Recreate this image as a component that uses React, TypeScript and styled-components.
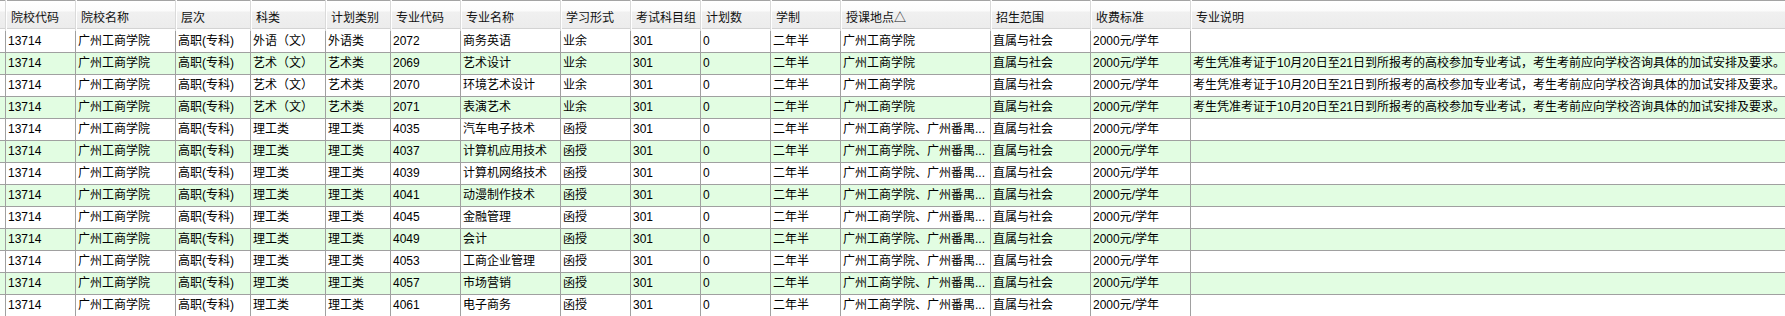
import { createGlobalStyle } from 'styled-components';
import styled from 'styled-components';

const GlobalStyle = createGlobalStyle`
  html, body {
    margin: 0;
    padding: 0;
    background: #ffffff;
  }
  body {
    font-family: "Liberation Sans", "Noto Sans CJK SC", sans-serif;
    font-size: 12px;
    color: #000;
  }
`;

interface Row {
  school: string;
  subject: string;
  planType: string;
  code: string;
  major: string;
  form: string;
  place: string;
  note: string;
}

interface ColumnDef {
  title: string;
  width: number;
}

interface CellProps {
  $green?: boolean;
  $clip?: boolean;
}

const NOTE = '考生凭准考证于10月20日至21日到所报考的高校参加专业考试，考生考前应向学校咨询具体的加试安排及要求。';
const PLACE_ONE = '广州工商学院';
const PLACE_TWO = '广州工商学院、广州番禺...';

const columns: ColumnDef[] = [
  { title: '院校代码', width: 70 },
  { title: '院校名称', width: 100 },
  { title: '层次', width: 75 },
  { title: '科类', width: 75 },
  { title: '计划类别', width: 65 },
  { title: '专业代码', width: 70 },
  { title: '专业名称', width: 100 },
  { title: '学习形式', width: 70 },
  { title: '考试科目组', width: 70 },
  { title: '计划数', width: 70 },
  { title: '学制', width: 70 },
  { title: '授课地点△', width: 150 },
  { title: '招生范围', width: 100 },
  { title: '收费标准', width: 100 },
  { title: '专业说明', width: 596 },
];

const rows: Row[] = [
  { school: '13714', subject: '外语（文）', planType: '外语类', code: '2072', major: '商务英语', form: '业余', place: PLACE_ONE, note: '' },
  { school: '13714', subject: '艺术（文）', planType: '艺术类', code: '2069', major: '艺术设计', form: '业余', place: PLACE_ONE, note: NOTE },
  { school: '13714', subject: '艺术（文）', planType: '艺术类', code: '2070', major: '环境艺术设计', form: '业余', place: PLACE_ONE, note: NOTE },
  { school: '13714', subject: '艺术（文）', planType: '艺术类', code: '2071', major: '表演艺术', form: '业余', place: PLACE_ONE, note: NOTE },
  { school: '13714', subject: '理工类', planType: '理工类', code: '4035', major: '汽车电子技术', form: '函授', place: PLACE_TWO, note: '' },
  { school: '13714', subject: '理工类', planType: '理工类', code: '4037', major: '计算机应用技术', form: '函授', place: PLACE_TWO, note: '' },
  { school: '13714', subject: '理工类', planType: '理工类', code: '4039', major: '计算机网络技术', form: '函授', place: PLACE_TWO, note: '' },
  { school: '13714', subject: '理工类', planType: '理工类', code: '4041', major: '动漫制作技术', form: '函授', place: PLACE_TWO, note: '' },
  { school: '13714', subject: '理工类', planType: '理工类', code: '4045', major: '金融管理', form: '函授', place: PLACE_TWO, note: '' },
  { school: '13714', subject: '理工类', planType: '理工类', code: '4049', major: '会计', form: '函授', place: PLACE_TWO, note: '' },
  { school: '13714', subject: '理工类', planType: '理工类', code: '4053', major: '工商企业管理', form: '函授', place: PLACE_TWO, note: '' },
  { school: '13714', subject: '理工类', planType: '理工类', code: '4057', major: '市场营销', form: '函授', place: PLACE_TWO, note: '' },
  { school: '13714', subject: '理工类', planType: '理工类', code: '4061', major: '电子商务', form: '函授', place: PLACE_TWO, note: '' },
];

const Grid = styled.table`
  width: 1785px;
  table-layout: fixed;
  border-collapse: separate;
  border-spacing: 0;
  font-size: 12px;
`;

const HeadCell = styled.th<{ $first?: boolean }>`
  box-sizing: border-box;
  height: 31px;
  padding: 2px 0 0 5px;
  text-align: left;
  font-weight: normal;
  color: #111;
  white-space: nowrap;
  overflow: hidden;
  border-left: ${(props) => (props.$first ? 'none' : '1px solid #dadada')};
  box-shadow: ${(props) => (props.$first ? 'none' : 'inset 1px 0 0 #ffffff')};
  background: linear-gradient(
    to bottom,
    #a3a3a3 0px,
    #a3a3a3 1px,
    #ffffff 1px,
    #fbfbfb 11px,
    #f0f0f0 12px,
    #ececec 28px,
    #d3d3d3 28px,
    #d3d3d3 29px,
    #ffffff 29px,
    #ffffff 31px
  );
`;

const SelectorCell = styled.td<CellProps>`
  box-sizing: border-box;
  height: 22px;
  padding: 0;
  border-bottom: 1px solid #a0a0a0;
  background: ${(props) => (props.$green ? '#e2fde2' : '#ffffff')};
`;

const Cell = styled.td<CellProps>`
  box-sizing: border-box;
  height: 22px;
  padding: ${(props) => (props.$clip ? '0 0 0 2px' : '0 1px 0 2px')};
  line-height: 21px;
  white-space: nowrap;
  overflow: hidden;
  text-overflow: ${(props) => (props.$clip ? 'clip' : 'ellipsis')};
  border-left: 1px solid #a0a0a0;
  border-bottom: 1px solid #a0a0a0;
  background: ${(props) => (props.$green ? '#e2fde2' : '#ffffff')};
  color: #000;
`;

function App() {
  return (
    <>
      <GlobalStyle />
      <Grid>
        <thead>
          <tr>
            <HeadCell $first style={{ width: 4 }} />
            {columns.map((col) => (
              <HeadCell key={col.title} style={{ width: col.width }}>
                {col.title}
              </HeadCell>
            ))}
          </tr>
        </thead>
        <tbody>
          {rows.map((row, index) => {
            const green = index % 2 === 1;
            return (
              <tr key={row.code}>
                <SelectorCell $green={green} />
                <Cell $green={green}>{row.school}</Cell>
                <Cell $green={green}>广州工商学院</Cell>
                <Cell $green={green}>高职(专科)</Cell>
                <Cell $green={green}>{row.subject}</Cell>
                <Cell $green={green}>{row.planType}</Cell>
                <Cell $green={green}>{row.code}</Cell>
                <Cell $green={green}>{row.major}</Cell>
                <Cell $green={green}>{row.form}</Cell>
                <Cell $green={green}>301</Cell>
                <Cell $green={green}>0</Cell>
                <Cell $green={green}>二年半</Cell>
                <Cell $green={green}>{row.place}</Cell>
                <Cell $green={green}>直属与社会</Cell>
                <Cell $green={green}>2000元/学年</Cell>
                <Cell $green={green} $clip>{row.note}</Cell>
              </tr>
            );
          })}
        </tbody>
      </Grid>
    </>
  );
}

export default App;
